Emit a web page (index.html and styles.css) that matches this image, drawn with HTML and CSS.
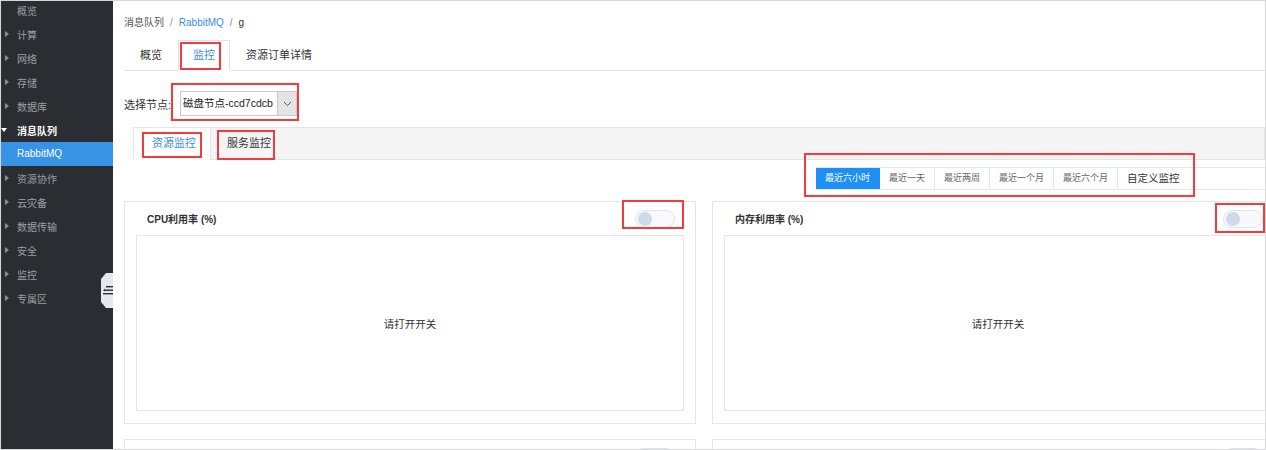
FILE: index.html
```html
<!DOCTYPE html>
<html lang="zh-CN">
<head>
    <meta charset="UTF-8">
    <title>RabbitMQ - 监控</title>
    <link rel="stylesheet" href="styles.css">
</head>
<body>
<div class="frame">
    <aside class="sidebar">
        <ul class="nav">
            <li class="nav-item plain">概览</li>
            <li class="nav-item">计算</li>
            <li class="nav-item">网络</li>
            <li class="nav-item">存储</li>
            <li class="nav-item">数据库</li>
            <li class="nav-item open">消息队列</li>
            <li class="nav-sub active">RabbitMQ</li>
            <li class="nav-item">资源协作</li>
            <li class="nav-item">云灾备</li>
            <li class="nav-item">数据传输</li>
            <li class="nav-item">安全</li>
            <li class="nav-item">监控</li>
            <li class="nav-item">专属区</li>
        </ul>
        <div class="collapse-handle">
            <svg width="12" height="35" viewBox="0 0 12 35">
                <polygon points="5,0 12,0 12,35 5,35 0,29 0,6" fill="#e4e8f0"/>
                <rect x="5" y="13" width="7" height="1.4" fill="#2b2e33"/>
                <rect x="4" y="16.5" width="8" height="1.4" fill="#2b2e33"/>
                <polygon points="2,17.2 4,15.8 4,18.6" fill="#2b2e33"/>
                <rect x="2" y="20" width="10" height="1.4" fill="#2b2e33"/>
            </svg>
        </div>
    </aside>

    <main class="main">
        <div class="breadcrumb">
            <span>消息队列</span><span class="sep">/</span><a class="link">RabbitMQ</a><span class="sep">/</span><span class="current">g</span>
        </div>

        <div class="tabs">
            <div class="tab">概览</div>
            <div class="tab active">监控</div>
            <div class="tab">资源订单详情</div>
        </div>

        <div class="node-row">
            <span class="node-label">选择节点:</span>
            <div class="select">
                <span class="select-value">磁盘节点-ccd7cdcb</span>
                <span class="select-arrow">
                    <svg width="9" height="6" viewBox="0 0 9 6"><polyline points="1,1 4.5,4.5 8,1" fill="none" stroke="#555" stroke-width="1"/></svg>
                </span>
            </div>
        </div>

        <div class="subtabs">
            <div class="subtab active">资源监控</div>
            <div class="subtab">服务监控</div>
        </div>

        <div class="toolbar">
            <div class="range-group">
                <span class="range-btn active">最近六小时</span>
                <span class="range-btn">最近一天</span>
                <span class="range-btn">最近两周</span>
                <span class="range-btn">最近一个月</span>
                <span class="range-btn">最近六个月</span>
                <span class="range-btn custom">自定义监控</span>
            </div>
        </div>

        <div class="cards">
            <div class="card">
                <div class="card-head">
                    <span class="card-title">CPU利用率 (%)</span>
                    <span class="switch"></span>
                </div>
                <div class="chart">请打开开关</div>
            </div>
            <div class="card">
                <div class="card-head">
                    <span class="card-title">内存利用率 (%)</span>
                    <span class="switch"></span>
                </div>
                <div class="chart">请打开开关</div>
            </div>
            <!-- next row, only its top edge is on screen -->
            <div class="card">
                <div class="card-head">
                    <span class="card-title"></span>
                    <span class="switch"></span>
                </div>
                <div class="chart"></div>
            </div>
            <div class="card">
                <div class="card-head">
                    <span class="card-title"></span>
                    <span class="switch"></span>
                </div>
                <div class="chart"></div>
            </div>
        </div>
    </main>
</div>

<!-- red annotation boxes drawn over the screenshot -->
<div class="marks">
    <span class="mark mark-tab"></span>
    <span class="mark mark-select"></span>
    <span class="mark mark-res"></span>
    <span class="mark mark-svc"></span>
    <span class="mark mark-range"></span>
    <span class="mark mark-cpu"></span>
    <span class="mark mark-mem"></span>
</div>
</body>
</html>
```

FILE: styles.css
```css
* {
    box-sizing: border-box;
}

body {
    margin: 0;
    width: 1266px;
    height: 450px;
    overflow: hidden;
    position: relative;
    background: #fff;
    color: #333;
    font-family: "Liberation Sans", "Noto Sans CJK SC", sans-serif;
}

.frame {
    display: flex;
    height: 450px;
    border: 1px solid #d8d8d8;
}

/* sidebar */

.sidebar {
    width: 112px;
    flex: none;
    background: #2a2d32;
    position: relative;
}

.nav {
    list-style: none;
    margin: -3px 0 0;
    padding: 0;
}

.nav-item {
    height: 24px;
    display: flex;
    align-items: center;
    padding-left: 4px;
    font-size: 10px;
    color: #9c9fa4;
}

.nav-item::before {
    content: "";
    width: 0;
    height: 0;
    border-left: 4px solid #8d9095;
    border-top: 3px solid transparent;
    border-bottom: 3px solid transparent;
    margin-right: 8px;
}

.nav-item.plain::before {
    visibility: hidden;
}

.nav-item.open {
    padding-left: 0;
    color: #fff;
    font-weight: bold;
}

.nav-item.open::before {
    border-top: 4px solid #fff;
    border-left: 3px solid transparent;
    border-right: 3px solid transparent;
    border-bottom: 0;
    margin-right: 10px;
}

.nav-sub {
    height: 24px;
    line-height: 24px;
    padding-left: 16px;
    font-size: 10px;
    color: #fff;
}

.nav-sub.active {
    background: #3793e6;
}

.collapse-handle {
    position: absolute;
    right: 0;
    top: 272px;
    width: 12px;
    height: 35px;
}

.collapse-handle svg {
    display: block;
}

/* main */

.main {
    flex: 1;
    min-width: 0;
    overflow: hidden;
    padding-left: 11px;
}

.breadcrumb {
    height: 39px;
    padding-top: 14px;
    line-height: 16px;
    font-size: 10px;
    color: #555;
}

.breadcrumb .sep {
    margin: 0 6px;
    color: #888;
}

.breadcrumb .link {
    color: #3a8ee6;
}

.breadcrumb .current {
    color: #333;
}

.tabs {
    display: flex;
    height: 31px;
    border-bottom: 1px solid #e3e3e3;
}

.tab {
    padding: 0 16px;
    line-height: 30px;
    font-size: 11px;
    color: #333;
}

.tab.active {
    border: 1px solid #e3e3e3;
    border-bottom-color: #fff;
    background: #fff;
    color: #3a8ee6;
    line-height: 29px;
    height: 31px;
    padding: 0 14px;
}

.node-row {
    display: flex;
    align-items: center;
    margin-top: 20px;
    font-size: 11px;
    color: #333;
}

.node-label {
    width: 56px;
}

.select {
    display: flex;
    width: 117px;
    height: 25px;
    border: 1px solid #c9c9c9;
    background: #fff;
}

.select-value {
    flex: 1;
    padding-left: 2px;
    line-height: 23px;
    font-size: 10.5px;
    white-space: nowrap;
    overflow: hidden;
    color: #222;
}

.select-arrow {
    width: 19px;
    display: flex;
    align-items: center;
    justify-content: center;
    background: #e4e4e4;
    border-left: 1px solid #c9c9c9;
}

.subtabs {
    display: flex;
    height: 33px;
    margin: 11px 0 0 9px;
    background: #f4f4f4;
    border: 1px solid #e5e5e5;
}

.subtab {
    padding: 0 16px;
    line-height: 31px;
    font-size: 11px;
    color: #333;
}

.subtab.active {
    background: #fff;
    color: #3a8ee6;
    border-right: 1px solid #e5e5e5;
    height: 32px;
    padding: 0 14px 0 18px;
}

.toolbar {
    display: flex;
    margin-top: 7px;
    height: 23px;
}

.range-group {
    flex: 1;
    display: flex;
    margin-left: 692px;
    border-top: 1px solid #e3e6ec;
    border-bottom: 1px solid #e3e6ec;
}

.range-btn {
    padding: 0 9px;
    line-height: 21px;
    font-size: 9px;
    color: #666;
    border-right: 1px solid #e3e6ec;
    white-space: nowrap;
}

.range-btn.active {
    background: #1e8ff5;
    border-right-color: #1e8ff5;
    color: #fff;
}

.range-btn.custom {
    padding: 0 9px;
    font-size: 10.5px;
    color: #333;
    border-right: 0;
}

.cards {
    display: grid;
    grid-template-columns: 572px 572px;
    gap: 15px 16px;
    margin-top: 11px;
}

.card {
    height: 223px;
    display: flex;
    flex-direction: column;
    padding: 0 11px 12px;
    border: 1px solid #e6e6e6;
}

.card-head {
    height: 33px;
    display: flex;
    align-items: center;
    justify-content: space-between;
    padding: 0 9px 0 11px;
}

.card-title {
    font-size: 10px;
    font-weight: bold;
    color: #333;
}

.switch {
    position: relative;
    width: 40px;
    height: 18px;
    border-radius: 9px;
    border: 1px solid #dfe4ec;
    background: #f7f9fc;
}

.switch::after {
    content: "";
    position: absolute;
    left: 2px;
    top: 1px;
    width: 14px;
    height: 14px;
    border-radius: 50%;
    background: #cfd9e8;
}

.chart {
    flex: 1;
    display: flex;
    align-items: center;
    justify-content: center;
    border: 1px solid #e6e6e6;
    font-size: 10.5px;
    color: #333;
}

/* annotations */

.marks {
    position: absolute;
    left: 0;
    top: 0;
    width: 1266px;
    height: 450px;
    pointer-events: none;
}

.mark {
    position: absolute;
    border: 2px solid #f23c3c;
}

.mark-tab { left: 180px; top: 42px; width: 41px; height: 28px; }
.mark-select { left: 171px; top: 83px; width: 128px; height: 38px; }
.mark-res { left: 142px; top: 132px; width: 60px; height: 26px; }
.mark-svc { left: 217px; top: 130px; width: 58px; height: 30px; }
.mark-range { left: 804px; top: 153px; width: 391px; height: 44px; }
.mark-cpu { left: 622px; top: 200px; width: 62px; height: 29px; }
.mark-mem { left: 1215px; top: 203px; width: 50px; height: 30px; }
```
